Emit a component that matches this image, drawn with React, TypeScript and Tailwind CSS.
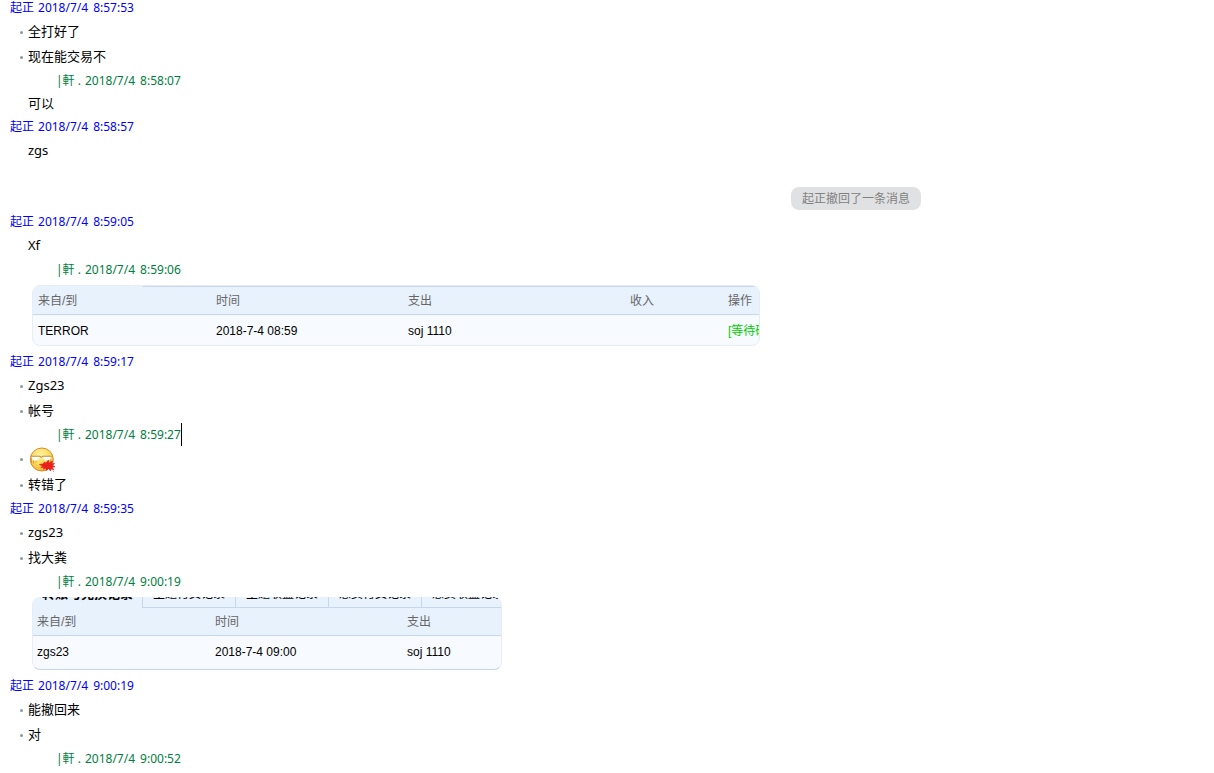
import React from "react";

type Sender = "other" | "self";

interface MessageHeaderProps {
  sender: Sender;
  date: string;
  time: string;
  caret?: boolean;
}

interface LineProps {
  bullet?: boolean;
  compact?: boolean;
  children: React.ReactNode;
}

const MessageHeader: React.FC<MessageHeaderProps> = ({
  sender,
  date,
  time,
  caret,
}) => (
  <header
    className={`flex h-[23px] items-center text-xs whitespace-nowrap ${
      sender === "other" ? "pl-[10px] text-[#0000ff]" : "pl-14 text-[#008040]"
    }`}
  >
    <span className="mr-1">{sender === "other" ? "起正" : "|軒 ."}</span>
    <time className="flex gap-[5px]">
      <span>{date}</span>
      <span>{time}</span>
    </time>
    {caret && <span className="h-[23px] w-px bg-black" />}
  </header>
);

const Bullet = () => <span className="size-[3px] rounded-full bg-[#8a9a9a]" />;

const Line: React.FC<LineProps> = ({ bullet, compact, children }) => (
  <div
    className={`flex items-center text-[13px] text-black ${
      compact ? "h-[23px]" : "h-[25px] pt-px"
    }`}
  >
    <span className="flex w-7 shrink-0 justify-end pr-[5px]">
      {bullet && <Bullet />}
    </span>
    <div>{children}</div>
  </div>
);

const Emoji = () => (
  <svg
    width="28"
    height="28"
    viewBox="0 0 28 28"
    role="img"
    aria-label="吐血"
    className="block"
  >
    <defs>
      <radialGradient id="face" cx="0.45" cy="0.3" r="0.75">
        <stop offset="0" stopColor="#fff0a8" />
        <stop offset="0.55" stopColor="#fddc58" />
        <stop offset="1" stopColor="#f3ab30" />
      </radialGradient>
    </defs>
    <circle cx="13.8" cy="13.5" r="11.5" fill="url(#face)" stroke="#d98a2b" />
    {/* eyes */}
    <path
      d="M3.5 10.500h8q-.4 4-4 4t-4-4zM15 10.500h8q-.4 4-4 4t-4-4z"
      fill="#fff"
    />
    <path
      d="M2.500 10.200h9.300l1.400 1.200 1.400-1.200h9.200"
      fill="none"
      stroke="#bd8f52"
      strokeWidth="1.1"
    />
    <path
      d="M3.500 12v5M5.500 14.500v3M8 15v1.500M22.500 13.500v2"
      fill="none"
      stroke="#c4924a"
      strokeWidth="0.8"
    />
    {/* blood */}
    <path
      d="M11.500 18.500l3-.5 2.500-2 .5 1.500 3-3.500.5 3 3.500-2-1 2.800 3-.3-2 1.800 2.500 1.500-3 .4 2 2.800-3-1.200-.5 2.200-2-2.500-2 2-.7-2.500-2.300 1.200.5-2-3 .3 1.500-1.500z"
      fill="#e8211d"
      stroke="#e8211d"
      strokeWidth="0.7"
      strokeLinejoin="round"
    />
    <circle cx="25.5" cy="25.5" r="0.7" fill="#bbb" />
  </svg>
);

const tabs = ["主题付费记录", "主题收益记录", "悬赏付费记录", "悬赏收益记录"];

export default function App() {
  return (
    <main className="-mt-1 overflow-hidden bg-white font-['Noto_Sans','Noto_Sans_CJK_SC',sans-serif]">
      <MessageHeader sender="other" date="2018/7/4" time="8:57:53" />
      <Line bullet>全打好了</Line>
      <Line bullet>现在能交易不</Line>

      <MessageHeader sender="self" date="2018/7/4" time="8:58:07" />
      <Line compact>可以</Line>

      <MessageHeader sender="other" date="2018/7/4" time="8:58:57" />
      <Line>zgs</Line>

      {/* recall notice */}
      <div className="mt-6 flex">
        <div className="flex-[27]" />
        <p className="flex h-[23px] w-[130px] shrink-0 items-center justify-center rounded-lg bg-[#e0e1e3] text-xs text-[#808080]">
          起正撤回了一条消息
        </p>
        <div className="flex-[10]" />
      </div>

      <MessageHeader sender="other" date="2018/7/4" time="8:59:05" />
      <Line>Xf</Line>

      <MessageHeader sender="self" date="2018/7/4" time="8:59:06" />
      <div className="my-1 ml-8 w-[728px] max-w-full overflow-hidden rounded-lg border border-[#e6edf5] bg-[#f7fbff]">
        <div className="flex h-px bg-[#e8f2fd]">
          <span className="w-[110px]" />
          <span className="flex-1 bg-[#c7d7ea]" />
        </div>
        <table className="w-full table-fixed text-left font-['Liberation_Sans','Noto_Sans_CJK_SC',sans-serif] text-xs whitespace-nowrap">
          <colgroup>
            <col className="w-[178px]" />
            <col className="w-[192px]" />
            <col className="w-[222px]" />
            <col className="w-[98px]" />
            <col />
          </colgroup>
          <thead>
            <tr className="h-[27px] border-b border-[#c7d7ea] bg-[#e8f2fd] text-[#666666]">
              <th className="pt-0.5 pl-[5px] font-normal">来自/到</th>
              <th className="pt-0.5 pl-[5px] font-normal">时间</th>
              <th className="pt-0.5 pl-[5px] font-normal">支出</th>
              <th className="pt-0.5 pl-[5px] font-normal">收入</th>
              <th className="pt-0.5 pl-[5px] font-normal">操作</th>
            </tr>
          </thead>
          <tbody>
            <tr className="h-[31px] text-black">
              <td className="pt-0.5 pl-[5px]">TERROR</td>
              <td className="pt-0.5 pl-[5px]">2018-7-4 08:59</td>
              <td className="pt-0.5 pl-[5px]">soj 1110</td>
              <td />
              <td className="overflow-hidden pt-0.5 pl-[5px] text-[#00cc00]">
                [等待确
              </td>
            </tr>
          </tbody>
        </table>
      </div>

      <MessageHeader sender="other" date="2018/7/4" time="8:59:17" />
      <Line bullet>Zgs23</Line>
      <Line bullet>帐号</Line>

      <MessageHeader sender="self" date="2018/7/4" time="8:59:27" caret />
      <div className="flex h-[26px] items-center pt-px">
        <span className="flex w-7 shrink-0 justify-end pr-[5px]">
          <Bullet />
        </span>
        <Emoji />
      </div>
      <Line bullet>转错了</Line>

      <MessageHeader sender="other" date="2018/7/4" time="8:59:35" />
      <Line bullet>zgs23</Line>
      <Line bullet>找大粪</Line>

      <MessageHeader sender="self" date="2018/7/4" time="9:00:19" />
      <div className="my-1 ml-8 w-[470px] max-w-full overflow-hidden rounded-lg border-x border-b border-[#e6edf5] border-b-[#c7d7ea] bg-[#f7fbff]">
        <nav className="flex h-[11px] items-end overflow-hidden bg-[#e8f2fd] font-['Liberation_Sans','Noto_Sans_CJK_SC',sans-serif] text-xs text-black">
          <a
            href="#transfer"
            className="flex h-6 w-[109px] shrink-0 items-center justify-center pb-1 text-[13px] font-bold whitespace-nowrap"
          >
            转账与兑换记录
          </a>
          {tabs.map((tab) => (
            <a
              key={tab}
              href="#log"
              className="flex h-6 w-[93px] shrink-0 items-center justify-center border-b border-l border-[#c7d7ea] pb-[3px] whitespace-nowrap"
            >
              {tab}
            </a>
          ))}
        </nav>
        <table className="w-full table-fixed text-left font-['Liberation_Sans','Noto_Sans_CJK_SC',sans-serif] text-xs whitespace-nowrap">
          <colgroup>
            <col className="w-[178px]" />
            <col className="w-[192px]" />
            <col />
          </colgroup>
          <thead>
            <tr className="h-[27px] border-b border-[#c7d7ea] bg-[#e8f2fd] text-[#666666]">
              <th className="pt-0.5 pl-1 font-normal">来自/到</th>
              <th className="pt-0.5 pl-1 font-normal">时间</th>
              <th className="pt-0.5 pl-1 font-normal">支出</th>
            </tr>
          </thead>
          <tbody>
            <tr className="h-[34px] text-black">
              <td className="pl-1">zgs23</td>
              <td className="pl-1">2018-7-4 09:00</td>
              <td className="pl-1">soj 1110</td>
            </tr>
          </tbody>
        </table>
      </div>

      <MessageHeader sender="other" date="2018/7/4" time="9:00:19" />
      <Line bullet>能撤回来</Line>
      <Line bullet>对</Line>

      <MessageHeader sender="self" date="2018/7/4" time="9:00:52" />
    </main>
  );
}
